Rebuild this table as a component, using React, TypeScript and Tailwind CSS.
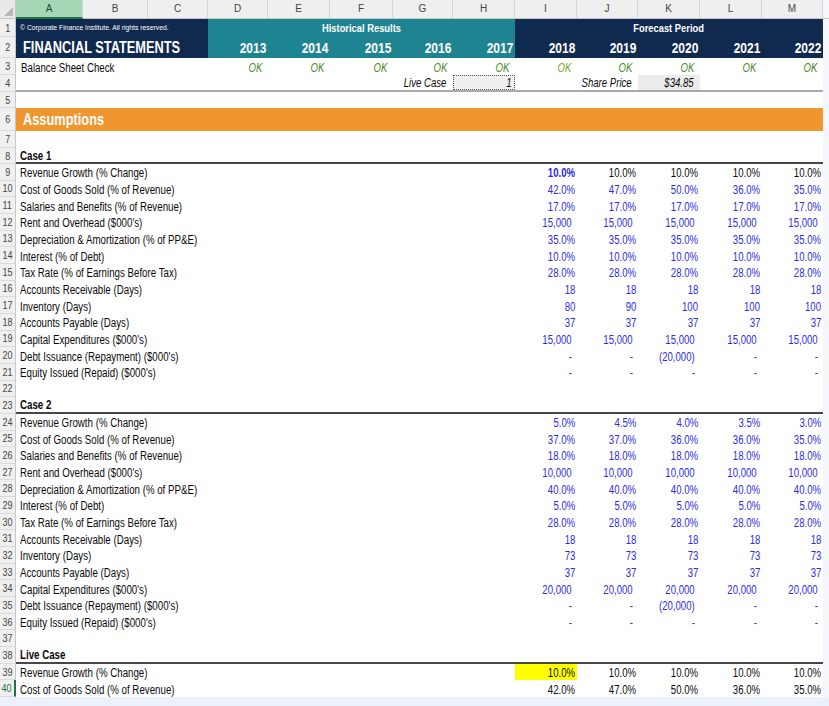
import React from "react";

const COLS =
  "grid grid-cols-[16px_67px_65px_60px_60px_62px_63px_60px_62px_62px_61px_62px_62px_61px_6px]";

const FONT = { fontFamily: '"Liberation Sans", Arial, sans-serif' };

type V = { t: string; k: "p" | "a" };

const p = (t: string): V => ({ t, k: "p" });
const a = (t: string): V => ({ t, k: "a" });
const rep = (v: V): V[] => [v, v, v, v, v];

type DataRow = { n: number; label: string; vals: V[]; blue: boolean; first?: "boldblue" | "yellow" };

const case1: DataRow[] = [
  { n: 9, label: "Revenue Growth (% Change)", vals: rep(p("10.0%")), blue: false, first: "boldblue" },
  { n: 10, label: "Cost of Goods Sold (% of Revenue)", vals: ["42.0%", "47.0%", "50.0%", "36.0%", "35.0%"].map(p), blue: true },
  { n: 11, label: "Salaries and Benefits (% of Revenue)", vals: rep(p("17.0%")), blue: true },
  { n: 12, label: "Rent and Overhead ($000's)", vals: rep(a("15,000")), blue: true },
  { n: 13, label: "Depreciation & Amortization (% of PP&E)", vals: rep(p("35.0%")), blue: true },
  { n: 14, label: "Interest (% of Debt)", vals: rep(p("10.0%")), blue: true },
  { n: 15, label: "Tax Rate (% of Earnings Before Tax)", vals: rep(p("28.0%")), blue: true },
  { n: 16, label: "Accounts Receivable (Days)", vals: rep(p("18")), blue: true },
  { n: 17, label: "Inventory (Days)", vals: ["80", "90", "100", "100", "100"].map(p), blue: true },
  { n: 18, label: "Accounts Payable (Days)", vals: rep(p("37")), blue: true },
  { n: 19, label: "Capital Expenditures ($000's)", vals: rep(a("15,000")), blue: true },
  { n: 20, label: "Debt Issuance (Repayment) ($000's)", vals: ["-", "-", "(20,000)", "-", "-"].map(a), blue: true },
  { n: 21, label: "Equity Issued (Repaid) ($000's)", vals: rep(a("-")), blue: true },
];

const case2: DataRow[] = [
  { n: 24, label: "Revenue Growth (% Change)", vals: ["5.0%", "4.5%", "4.0%", "3.5%", "3.0%"].map(p), blue: true },
  { n: 25, label: "Cost of Goods Sold (% of Revenue)", vals: ["37.0%", "37.0%", "36.0%", "36.0%", "35.0%"].map(p), blue: true },
  { n: 26, label: "Salaries and Benefits (% of Revenue)", vals: rep(p("18.0%")), blue: true },
  { n: 27, label: "Rent and Overhead ($000's)", vals: rep(a("10,000")), blue: true },
  { n: 28, label: "Depreciation & Amortization (% of PP&E)", vals: rep(p("40.0%")), blue: true },
  { n: 29, label: "Interest (% of Debt)", vals: rep(p("5.0%")), blue: true },
  { n: 30, label: "Tax Rate (% of Earnings Before Tax)", vals: rep(p("28.0%")), blue: true },
  { n: 31, label: "Accounts Receivable (Days)", vals: rep(p("18")), blue: true },
  { n: 32, label: "Inventory (Days)", vals: rep(p("73")), blue: true },
  { n: 33, label: "Accounts Payable (Days)", vals: rep(p("37")), blue: true },
  { n: 34, label: "Capital Expenditures ($000's)", vals: rep(a("20,000")), blue: true },
  { n: 35, label: "Debt Issuance (Repayment) ($000's)", vals: ["-", "-", "(20,000)", "-", "-"].map(a), blue: true },
  { n: 36, label: "Equity Issued (Repaid) ($000's)", vals: rep(a("-")), blue: true },
];

const live: DataRow[] = [
  { n: 39, label: "Revenue Growth (% Change)", vals: rep(p("10.0%")), blue: false, first: "yellow" },
  { n: 40, label: "Cost of Goods Sold (% of Revenue)", vals: ["42.0%", "47.0%", "50.0%", "36.0%", "35.0%"].map(p), blue: false },
];

/* narrow text helpers (Arial Narrow look) */
function L({ children }: { children: React.ReactNode }) {
  return <span className="inline-block whitespace-nowrap origin-left scale-x-[0.81]">{children}</span>;
}
function R({ children }: { children: React.ReactNode }) {
  return <span className="inline-block whitespace-nowrap origin-right scale-x-[0.8]">{children}</span>;
}
function C({ children }: { children: React.ReactNode }) {
  return <span className="inline-block whitespace-nowrap origin-center scale-x-[0.85]">{children}</span>;
}

function RowNum({ n, green }: { n: number; green?: boolean }) {
  return (
    <div
      className={
        "flex items-center justify-center pt-[2px] bg-[#f0f0f0] border-b border-b-[#dadada] text-[10px] leading-none " +
        (green ? "text-[#217346] border-r-2 border-r-[#217346]" : "text-[#444] border-r border-r-[#c6c6c6]")
      }
    >
      <span className="inline-block scale-x-[0.9]">{n}</span>
    </div>
  );
}

function Strip() {
  return <div className="bg-[#f4f6f9]" />;
}

function Data({ r }: { r: DataRow }) {
  return (
    <div className={`${COLS} h-[16.67px]`}>
      <RowNum n={r.n} green={r.n === 40} />
      <div className="col-span-8 flex items-center pt-[2px] pl-[4px] text-[12px] leading-none text-[#0a0a0a]">
        <L>{r.label}</L>
      </div>
      {r.vals.map((v, i) => {
        let cls = "flex items-center justify-end pt-[2px] text-[12px] leading-none ";
        cls += v.k === "a" ? "pr-[5px] " : "pr-[2px] ";
        if (i === 0 && r.first === "boldblue") cls += "font-bold text-[#2c2ce8] ";
        else if (r.blue) cls += "text-[#2c2ce8] ";
        else cls += "text-[#0a0a0a] ";
        if (i === 0 && r.first === "yellow") cls += "bg-[#ffff00] ";
        return (
          <div key={i} className={cls}>
            <R>{v.t}</R>
          </div>
        );
      })}
      <Strip />
    </div>
  );
}

function Blank({ n, h }: { n: number; h: string }) {
  return (
    <div className={`${COLS} ${h}`}>
      <RowNum n={n} />
      <div className="col-span-13" />
      <Strip />
    </div>
  );
}

function CaseHeader({ n, title, h }: { n: number; title: string; h: string }) {
  return (
    <div className={`${COLS} ${h}`}>
      <RowNum n={n} />
      <div className="col-span-13 flex items-center pt-[1px] pl-[4px] text-[12px] leading-none font-bold text-[#0a0a0a] border-b-2 border-b-[#474747]">
        <L>{title}</L>
      </div>
      <Strip />
    </div>
  );
}

const letters = ["A", "B", "C", "D", "E", "F", "G", "H", "I", "J", "K", "L", "M"];
const years1 = ["2013", "2014", "2015", "2016", "2017"];
const years2 = ["2018", "2019", "2020", "2021", "2022"];

export default function App() {
  return (
    <div className="w-[829px] h-[706px] bg-white overflow-hidden relative" style={FONT}>
      {/* column header */}
      <div className={`${COLS} h-[19px]`}>
        <div className="relative bg-[#e9e9e9] border-r border-r-[#c6c6c6] border-b border-b-[#c6c6c6]">
          <svg className="absolute right-[2px] bottom-[2px]" width="9" height="9" viewBox="0 0 9 9">
            <polygon points="9,0 9,9 0,9" fill="#b9b9b9" />
          </svg>
        </div>
        {letters.map((l, i) => (
          <div
            key={l}
            className={
              "flex items-center justify-center text-[10px] leading-none border-r border-r-[#d4d4d4] " +
              (i === 0
                ? "bg-[#a6d8b8] text-[#1c4a2c] border-b-2 border-b-[#217346]"
                : "bg-[#efefef] text-[#444] border-b border-b-[#c6c6c6]")
            }
          >
            {l}
          </div>
        ))}
        <div className="bg-[#f4f6f9] border-b border-b-[#c6c6c6]" />
      </div>

      {/* row 1 */}
      <div className={`${COLS} h-[18px]`}>
        <RowNum n={1} />
        <div className="col-span-3 bg-[#10294f] flex items-center pl-[4px] text-[8px] leading-none text-white">
          <span className="inline-block whitespace-nowrap origin-left scale-x-[0.85]">
            © Corporate Finance Institute. All rights reserved.
          </span>
        </div>
        <div className="col-span-5 bg-[#1f8491] flex items-center justify-center text-[11px] font-bold leading-none text-white">
          <C>Historical Results</C>
        </div>
        <div className="col-span-5 bg-[#10294f] flex items-center justify-center text-[11px] font-bold leading-none text-white">
          <C>Forecast Period</C>
        </div>
        <Strip />
      </div>

      {/* row 2 */}
      <div className={`${COLS} h-[21px]`}>
        <RowNum n={2} />
        <div className="col-span-3 bg-[#10294f] flex items-center pl-[7px] text-[16px] font-bold leading-none text-white">
          <span className="inline-block whitespace-nowrap origin-left scale-x-[0.8]">FINANCIAL STATEMENTS</span>
        </div>
        {years1.map((y) => (
          <div key={y} className="bg-[#1f8491] flex items-center justify-end pr-[2px] text-[15px] font-bold leading-none text-white">
            <span className="inline-block origin-right scale-x-[0.8]">{y}</span>
          </div>
        ))}
        {years2.map((y) => (
          <div key={y} className="bg-[#10294f] flex items-center justify-end pr-[2px] text-[15px] font-bold leading-none text-white">
            <span className="inline-block origin-right scale-x-[0.8]">{y}</span>
          </div>
        ))}
        <Strip />
      </div>

      {/* row 3 */}
      <div className={`${COLS} h-[17px]`}>
        <RowNum n={3} />
        <div className="col-span-3 flex items-center pt-[2px] pl-[5px] text-[12px] leading-none text-[#0a0a0a]">
          <L>Balance Sheet Check</L>
        </div>
        {[...years1, ...years2].map((y, i) => (
          <div
            key={y}
            className={
              "flex items-center justify-end pt-[2px] pr-[6px] text-[12px] italic leading-none " +
              (i === 5 ? "text-[#83a02a]" : "text-[#3f8a22]")
            }
          >
            <R>OK</R>
          </div>
        ))}
        <Strip />
      </div>

      {/* row 4 */}
      <div className={`${COLS} h-[17px]`}>
        <RowNum n={4} />
        <div className="col-span-13 grid grid-cols-[67px_65px_60px_60px_62px_63px_60px_62px_62px_61px_62px_62px_61px] border-b-2 border-b-[#a9a9a9]">
          <div className="col-span-7 flex items-center justify-end pt-[1px] pr-[7px] text-[12px] italic leading-none text-[#0a0a0a]">
            <R>Live Case</R>
          </div>
          <div className="bg-[#efefef] border border-dotted border-[#555] flex items-center justify-end pt-[1px] pr-[2px] text-[12px] italic leading-none text-[#0a0a0a]">
            <R>1</R>
          </div>
          <div />
          <div className="flex items-center justify-end pt-[1px] pr-[6px] text-[12px] italic leading-none text-[#0a0a0a]">
            <R>Share Price</R>
          </div>
          <div className="bg-[#ececec] flex items-center justify-end pt-[1px] pr-[6px] text-[12px] italic leading-none text-[#0a0a0a]">
            <R>$34.85</R>
          </div>
          <div />
        </div>
        <Strip />
      </div>

      <Blank n={5} h="h-[16px]" />

      {/* row 6 */}
      <div className={`${COLS} h-[23px]`}>
        <RowNum n={6} />
        <div className="col-span-13 bg-[#ef962f] flex items-center pl-[7px] text-[16px] font-bold leading-none text-white">
          <span className="inline-block whitespace-nowrap origin-left scale-x-[0.8]">Assumptions</span>
        </div>
        <Strip />
      </div>

      <Blank n={7} h="h-[17px]" />
      <CaseHeader n={8} title="Case 1" h="h-[16px]" />
      {case1.map((r) => (
        <Data key={r.n} r={r} />
      ))}
      <Blank n={22} h="h-[16.67px]" />
      <CaseHeader n={23} title="Case 2" h="h-[16.67px]" />
      {case2.map((r) => (
        <Data key={r.n} r={r} />
      ))}
      <Blank n={37} h="h-[16.67px]" />
      <CaseHeader n={38} title="Live Case" h="h-[16.67px]" />
      {live.map((r) => (
        <Data key={r.n} r={r} />
      ))}
      <div className="h-[20px] bg-[#eaf1fa]" />
    </div>
  );
}
